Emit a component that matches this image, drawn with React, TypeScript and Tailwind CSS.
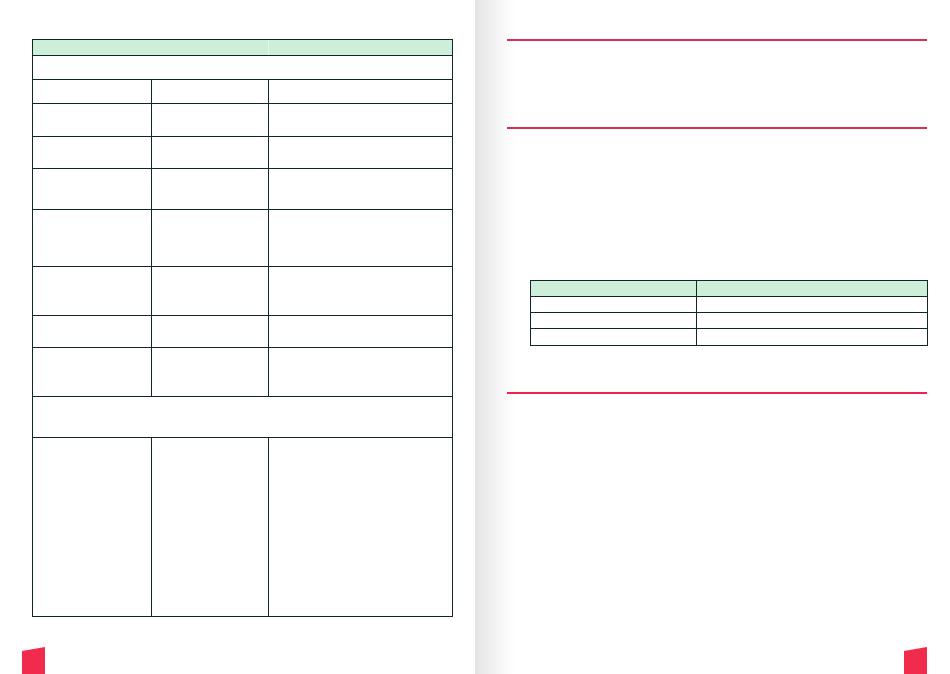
import React from 'react';

const LINE = 'border-[#12262a]';

// row heights measured from the spread (each includes its top rule)
const LEFT_ROWS: { h: string; span?: boolean }[] = [
  { h: 'h-[24px]' },
  { h: 'h-[33px]' },
  { h: 'h-[32px]' },
  { h: 'h-[41px]' },
  { h: 'h-[57px]' },
  { h: 'h-[49px]' },
  { h: 'h-[32px]' },
  { h: 'h-[49px]' },
  { h: 'h-[41px]', span: true },
  { h: 'h-[179px]' },
];

function PageTab({ className }: { className: string }) {
  return (
    <svg className={`absolute bottom-0 ${className}`} width="23" height="27" viewBox="0 0 23 27">
      <polygon points="0,4 23,0 23,27 0,27" fill="#f12b4c" />
    </svg>
  );
}

function LeftTable() {
  return (
    <div className={`w-[421px] border ${LINE} flex flex-col`}>
      {/* header */}
      <div className="h-[15px] flex bg-[#cdeed9]">
        <div className="w-[236px] border-r border-[#e6f5eb]" />
        <div className="flex-1" />
      </div>
      <div className={`h-[24px] border-t ${LINE}`} />
      {LEFT_ROWS.map((row, i) =>
        row.span ? (
          <div key={i} className={`${row.h} border-t ${LINE}`} />
        ) : (
          <div key={i} className={`${row.h} border-t ${LINE} flex`}>
            <div className={`w-[119px] border-r ${LINE}`} />
            <div className={`w-[117px] border-r ${LINE}`} />
            <div className="flex-1" />
          </div>
        )
      )}
    </div>
  );
}

function RightTable() {
  const rows = ['h-[16px]', 'h-[16px]', 'h-[17px]'];
  return (
    <div className={`w-[398px] border ${LINE} flex flex-col`}>
      <div className="h-[15px] flex bg-[#cdeed9]">
        <div className={`w-[166px] border-r ${LINE}`} />
        <div className="flex-1" />
      </div>
      {rows.map((h, i) => (
        <div key={i} className={`${h} border-t ${LINE} flex`}>
          <div className={`w-[166px] border-r ${LINE}`} />
          <div className="flex-1" />
        </div>
      ))}
    </div>
  );
}

export default function App() {
  return (
    <div className="w-[950px] h-[674px] flex bg-white overflow-hidden" style={{ fontFamily: '"Liberation Sans", Arial, sans-serif' }}>
      {/* Left page */}
      <div className="relative w-[475px] h-full bg-white pt-[39px] pl-[32px]">
        <LeftTable />
        <PageTab className="left-[22px]" />
      </div>

      {/* Right page */}
      <div className="relative flex-1 h-full bg-[linear-gradient(to_right,#e4e4e4,#f6f6f6_25px,#ffffff_40px)] pt-[39px] pl-[32px]">
        <div className="w-[420px] h-[1.5px] bg-[#d9304f]" />
        <div className="h-[86.5px]" />
        <div className="w-[420px] h-[1.5px] bg-[#d9304f]" />
        <div className="pl-[23px] pt-[151.5px]">
          <RightTable />
        </div>
        <div className="h-[46px]" />
        <div className="w-[420px] h-[2px] bg-[#f2204a]" />
        <PageTab className="left-[429px]" />
      </div>
    </div>
  );
}
